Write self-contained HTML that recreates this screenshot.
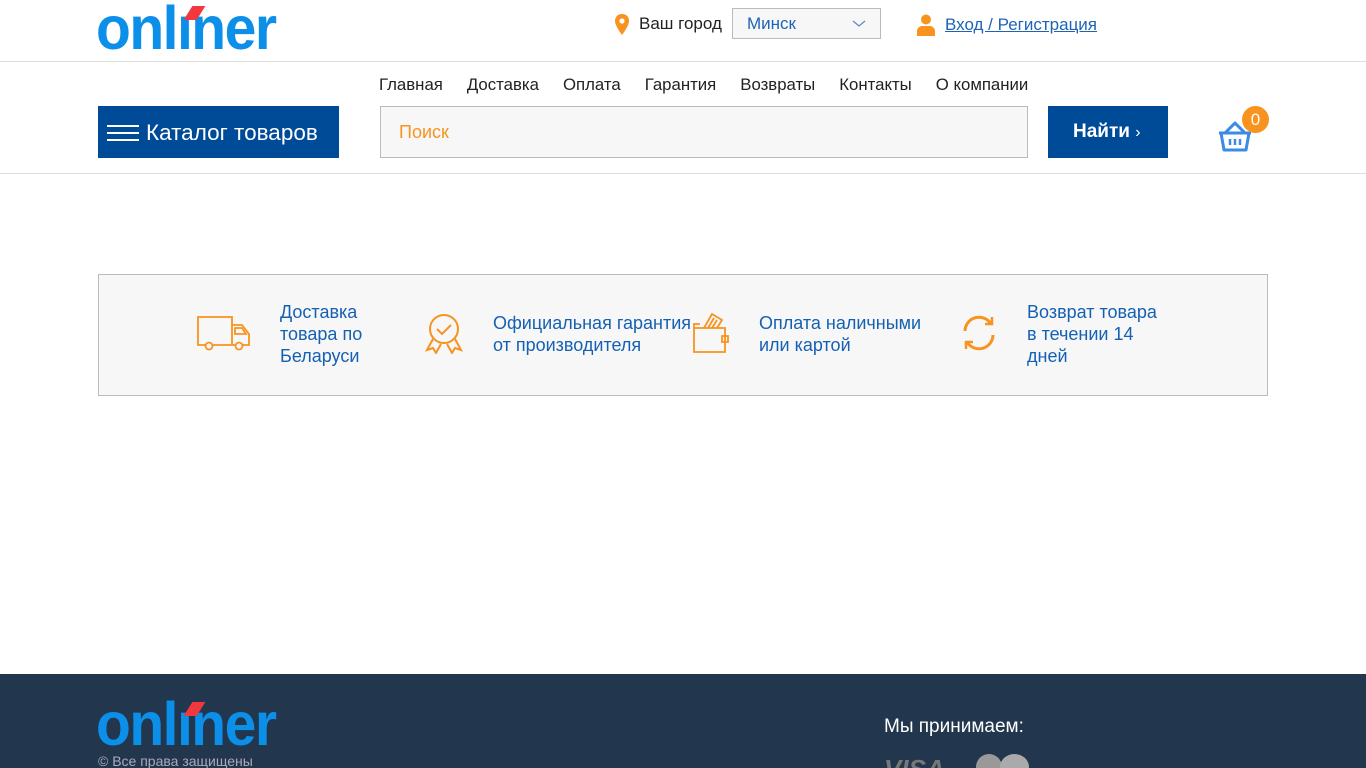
<!DOCTYPE html>
<html><head><meta charset="utf-8"><style>
*{margin:0;padding:0;box-sizing:border-box}
html,body{width:1366px;height:768px;overflow:hidden}
body{background:#fff;font-family:"Liberation Sans","DejaVu Sans",sans-serif;position:relative}
.a{position:absolute}
.logo{font-family:"Liberation Sans",sans-serif;font-weight:bold;color:#0b8fe8;font-size:57px;letter-spacing:-1.5px;line-height:1;white-space:nowrap;transform:scaleY(1.08);transform-origin:left bottom}
.mark{position:absolute;width:13px;height:14px;background:#f0383e;transform:skewX(-32deg)}
.nav span{margin-right:24px}
.feat{color:#1560b3;font-size:18px;line-height:22px}
</style></head><body>
<!-- header -->
<div class="a logo" style="left:96px;top:3px">onlıner</div>
<div class="a mark" style="left:188px;top:6px"></div>
<svg class="a" style="left:614px;top:14px" width="16" height="22" viewBox="0 0 16 22"><path d="M8 0C3.6 0 1 3 1 7c0 5 7 14 7 14s7-9 7-14c0-4-2.6-7-7-7z" fill="#f7931e"/><circle cx="8" cy="7" r="2.6" fill="#fff"/></svg>
<div class="a" style="left:639px;top:14px;font-size:17px;color:#222">Ваш город</div>
<div class="a" style="left:732px;top:8px;width:149px;height:31px;border:1px solid #bbb;background:#f7f7f7;color:#1d64b5;font-size:17px;padding:5px 14px">Минск
<svg class="a" style="left:119px;top:11px" width="14" height="8"><path d="M1 1l6 5 6-5" fill="none" stroke="#5a86c5" stroke-width="1.2"/></svg></div>
<svg class="a" style="left:917px;top:14px" width="18" height="22" viewBox="0 0 18 22"><circle cx="9" cy="5.5" r="5" fill="#f7931e"/><path d="M0 22v-5c0-3 3-5 5-5h8c2 0 5 2 5 5v5z" fill="#f7931e"/></svg>
<div class="a" style="left:945px;top:15px;font-size:17px;color:#1d64b5;text-decoration:underline">Вход / Регистрация</div>
<div class="a" style="left:0;top:61px;width:1366px;height:1px;background:#ddd"></div>
<div class="a nav" style="left:379px;top:75px;font-size:16.8px;color:#222;white-space:nowrap"><span>Главная</span><span>Доставка</span><span>Оплата</span><span>Гарантия</span><span>Возвраты</span><span>Контакты</span><span>О компании</span></div>
<div class="a" style="left:98px;top:106px;width:241px;height:52px;background:#004b98;color:#fff;font-size:22.5px;padding:14px 0 0 48px;white-space:nowrap">Каталог товаров
<div class="a" style="left:9px;top:19px;width:32px;height:2px;background:#fff;box-shadow:0 7px 0 #fff,0 14px 0 #fff"></div></div>
<div class="a" style="left:380px;top:106px;width:648px;height:52px;border:1px solid #bbb;background:#f7f7f7;color:#f7931e;font-size:18px;padding:15px 18px">Поиск</div>
<div class="a" style="left:1048px;top:106px;width:120px;height:52px;background:#004b98;color:#fff;font-size:19px;font-weight:bold;padding:15px 0 0 25px">Найти <span style="font-weight:normal;font-size:16px">›</span></div>
<svg class="a" style="left:1216px;top:116px" width="38" height="38" viewBox="0 0 38 38"><path d="M3 17h32M9 17l10-10 10 10M5 17l3 17h22l3-17" fill="none" stroke="#3a8ae8" stroke-width="3" stroke-linejoin="round"/><path d="M14 23v6M19 23v6M24 23v6" stroke="#3a8ae8" stroke-width="2.5"/></svg>
<div class="a" style="left:1242px;top:106px;width:27px;height:27px;border-radius:50%;background:#f7931e;color:#fff;font-size:17px;text-align:center;line-height:27px">0</div>
<div class="a" style="left:0;top:173px;width:1366px;height:1px;background:#ddd"></div>
<!-- features -->
<div class="a" style="left:98px;top:274px;width:1170px;height:122px;border:1px solid #bbb;background:#f7f7f7"></div>
<svg class="a" style="left:197px;top:315px" width="54" height="36" viewBox="0 0 54 36" fill="none" stroke="#f7931e" stroke-width="1.8"><path d="M1 2h34v28H1zM35 10h10l7 9v11H35"/><path d="M38 13h7l4 6h-11z"/><circle cx="12" cy="31" r="3.5" fill="#f7f7f7"/><circle cx="42" cy="31" r="3.5" fill="#f7f7f7"/></svg>
<div class="a feat" style="left:280px;top:301px">Доставка<br>товара по<br>Беларуси</div>
<svg class="a" style="left:424px;top:312px" width="40" height="42" viewBox="0 0 40 42" fill="none" stroke="#f7931e" stroke-width="2"><circle cx="20" cy="17" r="14"/><path d="M13 17l5 5 9-9"/><path d="M9 27L3 38l6-2 3 5 5-9M31 27l6 11-6-2-3 5-5-9"/></svg>
<div class="a feat" style="left:493px;top:312px">Официальная гарантия<br>от производителя</div>
<svg class="a" style="left:692px;top:312px" width="38" height="42" viewBox="0 0 38 42" fill="none" stroke="#f7931e" stroke-width="1.8"><path d="M2 16h31v24H2zM2 16V12h6"/><path d="M12 16l8-14 10 6-5 8M16 16l6-10M20 16l5-8"/><path d="M30 24h6v6h-6z"/></svg>
<div class="a feat" style="left:759px;top:312px">Оплата наличными<br>или картой</div>
<svg class="a" style="left:960px;top:314px" width="38" height="38" viewBox="0 0 38 38" fill="none" stroke="#f7931e" stroke-width="3"><path d="M5 17A14 14 0 0 1 31 10"/><path d="M33 21A14 14 0 0 1 7 28"/><path d="M25 10h7V3" stroke-width="2.5"/><path d="M13 28H6v7" stroke-width="2.5"/></svg>
<div class="a feat" style="left:1027px;top:301px">Возврат товара<br>в течении 14<br>дней</div>
<!-- footer -->
<div class="a" style="left:0;top:674px;width:1366px;height:94px;background:#22364d;overflow:hidden">
<div class="a logo" style="left:96px;top:25px">onlıner</div>
<div class="a mark" style="left:188px;top:28px"></div>
<div class="a" style="left:98px;top:79px;font-size:14px;color:#aab">© Все права защищены</div>
<div class="a" style="left:884px;top:42px;font-size:19px;color:#fff">Мы принимаем:</div>
<div class="a" style="left:884px;top:80px;font-size:26px;font-weight:bold;font-style:italic;color:#777">VISA</div>
<div class="a" style="left:976px;top:80px;width:26px;height:26px;border-radius:50%;background:#999"></div>
<div class="a" style="left:1000px;top:80px;width:29px;height:26px;border-radius:50%;background:#aaa"></div>
</div>
</body></html>
